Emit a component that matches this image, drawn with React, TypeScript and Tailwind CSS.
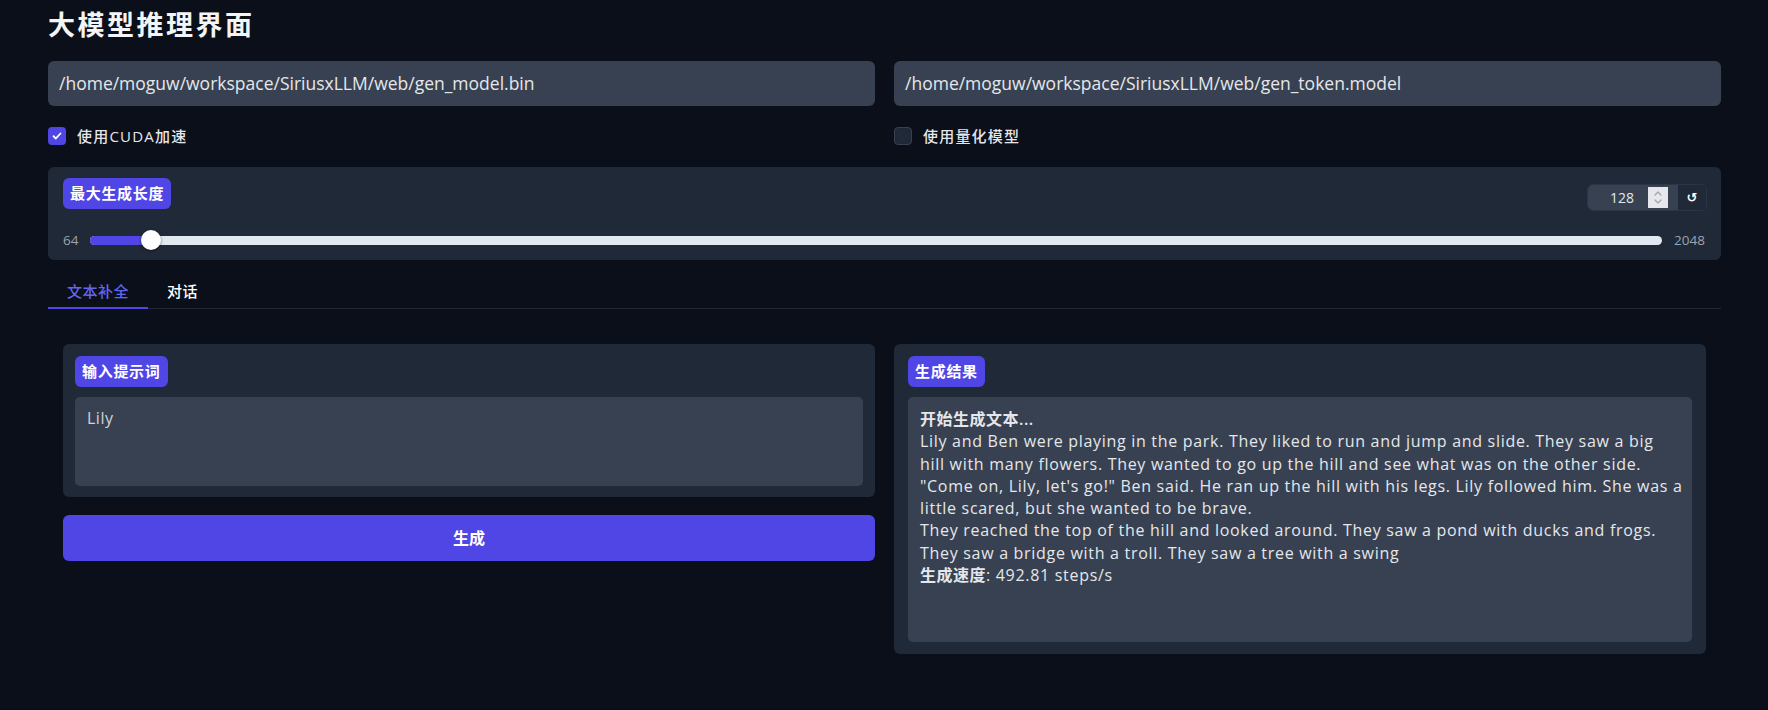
import { useState } from 'react';

const FONT = "font-['Open_Sans','Noto_Sans_CJK_SC',sans-serif]";

function Badge({ children }: { children: React.ReactNode }) {
  return (
    <div className="inline-flex h-[31px] items-center rounded-[6px] bg-[#4f46e5] px-[7px] text-[15px] font-bold tracking-[0.7px] text-white">
      {children}
    </div>
  );
}

function Checkbox({ checked, label }: { checked: boolean; label: string }) {
  return (
    <label className="flex h-[18px] items-center gap-[11px]">
      {checked ? (
        <span className="flex h-[18px] w-[18px] items-center justify-center rounded-[4px] bg-[#4f46e5]">
          <svg width="12" height="12" viewBox="0 0 12 12" fill="none">
            <path d="M2.5 6.2l2.3 2.3 4.7-5" stroke="white" strokeWidth="1.8" strokeLinecap="round" strokeLinejoin="round" />
          </svg>
        </span>
      ) : (
        <span className="h-[18px] w-[18px] rounded-[4px] border border-[#374151] bg-[#1f2937]" />
      )}
      <span className="text-[15px] font-medium tracking-[1.2px] text-[#e5e7eb]">{label}</span>
    </label>
  );
}

export default function App() {
  const [maxLen] = useState(128);
  const [tab, setTab] = useState<'complete' | 'chat'>('complete');
  const min = 64;
  const max = 2048;
  const pct = (maxLen - min) / (max - min);

  const lines = [
    'Lily and Ben were playing in the park. They liked to run and jump and slide. They saw a big',
    'hill with many flowers. They wanted to go up the hill and see what was on the other side.',
    '"Come on, Lily, let\'s go!" Ben said. He ran up the hill with his legs. Lily followed him. She was a',
    'little scared, but she wanted to be brave.',
    'They reached the top of the hill and looked around. They saw a pond with ducks and frogs.',
    'They saw a bridge with a troll. They saw a tree with a swing',
  ];

  return (
    <div className={`min-h-[710px] w-full bg-[#0b0f19] pl-[48px] pr-[47px] pt-[7px] text-[#e5e7eb] ${FONT}`}>
      <h1 className="text-[27px] font-bold leading-[35px] tracking-[2.5px] text-[#f3f4f6]">大模型推理界面</h1>

      {/* model paths */}
      <div className="mt-[19px] grid grid-cols-2 gap-[19px]">
        <div className="flex h-[45px] items-center rounded-[6px] bg-[#374151] px-[11px] text-[17.5px] text-[#e5e7eb]">
          /home/moguw/workspace/SiriusxLLM/web/gen_model.bin
        </div>
        <div className="flex h-[45px] items-center rounded-[6px] bg-[#374151] px-[11px] text-[17.5px] text-[#e5e7eb]">
          /home/moguw/workspace/SiriusxLLM/web/gen_token.model
        </div>
      </div>

      <div className="mt-[21px] grid grid-cols-2 gap-[19px]">
        <Checkbox checked label="使用CUDA加速" />
        <Checkbox checked={false} label="使用量化模型" />
      </div>

      {/* max length slider */}
      <div className="mt-[22px] rounded-[6px] bg-[#1f2937] pb-[10px] pl-[15px] pr-[16px] pt-[11px]">
        <div className="flex items-start justify-between">
          <Badge>最大生成长度</Badge>
          <div className="mr-[-2px] mt-[6px] flex h-[27px] overflow-hidden rounded-[6px] border border-[#2b3546]">
            <div className="flex w-[90px] items-center justify-end bg-[#374151] pr-[10px]">
              <span className="mr-[14px] text-[14px] text-[#e5e7eb]">{maxLen}</span>
              <span className="flex h-[21px] w-[20px] items-center justify-center bg-[#e5e7eb]">
                <svg width="10" height="17" viewBox="0 0 10 17" fill="none">
                  <path d="M2 6l3-3 3 3M2 11l3 3 3-3" stroke="#9ca3af" strokeWidth="1.2" strokeLinecap="round" strokeLinejoin="round" />
                </svg>
              </span>
            </div>
            <button className="flex w-[28px] items-center justify-center bg-[#1f2937] font-['DejaVu_Sans',sans-serif] text-[13px] font-bold text-white">
              ↺
            </button>
          </div>
        </div>
        <div className="mt-[19px] flex h-[20px] items-center gap-[12px]">
          <span className="text-[13.5px] text-[#9ca3af]">{min}</span>
          <div className="relative h-[9px] flex-1 rounded-full bg-[#e2e8f0]">
            <div
              className="absolute left-0 top-0 h-full rounded-l-full bg-[#4f46e5]"
              style={{ width: `calc(${pct} * (100% - 20px) + 10px)` }}
            />
            <div
              className="absolute top-1/2 h-[20px] w-[20px] -translate-y-1/2 rounded-full bg-white shadow-[0_1px_3px_rgba(0,0,0,0.5)]"
              style={{ left: `calc(${pct} * (100% - 20px))` }}
            />
          </div>
          <span className="text-[13.5px] text-[#9ca3af]">{max}</span>
        </div>
      </div>

      {/* tabs */}
      <div className="mt-[9px] flex border-b border-[#1f2937]">
        <button
          onClick={() => setTab('complete')}
          className={`-mb-px border-b-2 px-[19px] pb-[6px] pt-[12px] text-[15px] font-medium leading-5 tracking-[0.5px] ${tab === 'complete' ? 'border-[#4f46e5] text-[#6366f1]' : 'border-transparent text-white'}`}
        >
          文本补全
        </button>
        <button
          onClick={() => setTab('chat')}
          className={`-mb-px border-b-2 px-[19px] pb-[6px] pt-[12px] text-[15px] font-medium leading-5 tracking-[0.5px] ${tab === 'chat' ? 'border-[#4f46e5] text-[#6366f1]' : 'border-transparent text-white'}`}
        >
          对话
        </button>
      </div>

      <div className="mt-[35px] grid grid-cols-2 items-start gap-[19px] px-[15px]">
        <div>
          <div className="rounded-[6px] bg-[#1f2937] px-[12px] pb-[11px] pt-[12px]">
            <Badge>输入提示词</Badge>
            <div className="mt-[10px] h-[89px] rounded-[5px] bg-[#374151] px-[12px] pt-[10px] text-[16px] leading-[22px] tracking-[0.5px] text-[#d1d5db]">
              Lily
            </div>
          </div>
          <button className="mt-[18px] flex h-[46px] w-full items-center justify-center rounded-[6px] bg-[#4f46e5] text-[16px] font-bold text-white">
            生成
          </button>
        </div>

        <div className="rounded-[6px] bg-[#1f2937] px-[14px] pb-[12px] pt-[12px]">
          <Badge>生成结果</Badge>
          <div className="mt-[10px] h-[245px] rounded-[5px] bg-[#374151] px-[12px] pt-[11px] text-[16px] leading-[22.3px] tracking-[0.7px] text-[#e5e7eb]">
            <div className="font-semibold tracking-[0.5px]">开始生成文本...</div>
            {lines.map((l) => (
              <div key={l} className="whitespace-nowrap">{l}</div>
            ))}
            <div>
              <span className="font-semibold tracking-[0.5px]">生成速度</span>: 492.81 steps/s
            </div>
          </div>
        </div>
      </div>
    </div>
  );
}
